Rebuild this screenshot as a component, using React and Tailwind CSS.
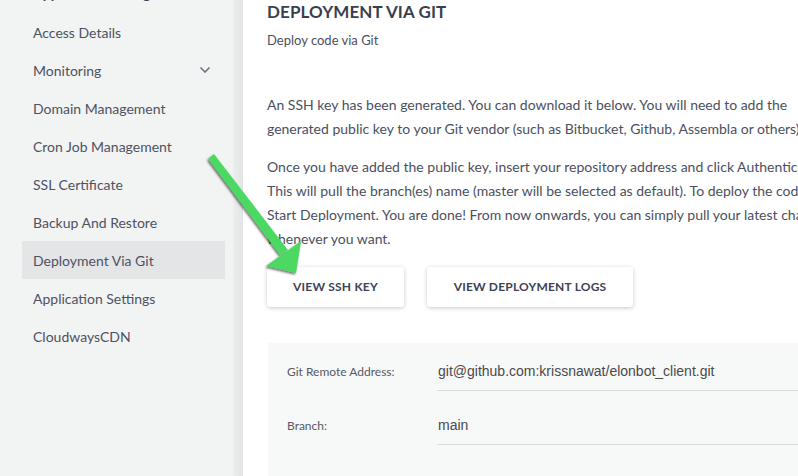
import React from "react";

const menu = [
  "Access Details",
  "Monitoring",
  "Domain Management",
  "Cron Job Management",
  "SSL Certificate",
  "Backup And Restore",
  "Deployment Via Git",
  "Application Settings",
  "CloudwaysCDN",
];

function Sidebar() {
  return (
    <aside className="relative w-[243px] shrink-0 h-full bg-[#f2f3f3] flex">
      <div className="flex-1 pl-[22px] pr-[8px]">
        <div className="-mt-[14px] mb-[11px] h-[16px] leading-[16px] pl-[11px] text-[14px] font-bold text-[#3b4050] whitespace-nowrap">
          Application Management
        </div>
        {menu.map((item) => (
          <div
            key={item}
            className={`h-[38px] flex items-center justify-between pl-[11px] pr-[14px] text-[14px] text-[#4d5262] ${
              item === "Deployment Via Git" ? "bg-[#e4e5e7]" : ""
            }`}
          >
            <span>{item}</span>
            {item === "Monitoring" && (
              <svg width="12" height="8" viewBox="0 0 12 8" fill="none">
                <path d="M1.5 1.5l4.5 4.5 4.5-4.5" stroke="#707585" strokeWidth="1.6" />
              </svg>
            )}
          </div>
        ))}
      </div>
      <div className="w-[10px] h-full bg-gradient-to-r from-[#eceded] to-[#e3e4e6]" />
    </aside>
  );
}

function Field({ label, value }) {
  return (
    <div className="flex items-stretch h-[39px]">
      <div className="w-[150px] shrink-0 flex items-center text-[12px] text-[#555a66]">{label}</div>
      <div className="flex-1 flex items-center border-b border-[#d9dadb] pl-[1px] text-[14px] text-[#4a4a4a] font-['Liberation_Sans',Arial,sans-serif]">
        {value}
      </div>
    </div>
  );
}

export default function App() {
  return (
    <div className="relative w-[798px] h-[476px] overflow-hidden bg-white flex font-['Lato',sans-serif]">
      <Sidebar />
      <main className="flex-1 min-w-0 pl-[24px] text-[#4b5060]">
        <h1 className="h-[24px] leading-[24px] text-[17px] font-bold text-[#3a3f4f] tracking-[0.1px]">
          DEPLOYMENT VIA GIT
        </h1>
        <p className="mt-[4px] leading-[24px] text-[13px]">Deploy code via Git</p>
        <div className="mt-[41px] text-[14px] leading-[24px] whitespace-nowrap">
          <p>
            An SSH key has been generated. You can download it below. You will need to add the
            <br />
            generated public key to your Git vendor (such as Bitbucket, Github, Assembla or others).
          </p>
          <p className="mt-[14px]">
            Once you have added the public key, insert your repository address and click Authenticate.
            <br />
            This will pull the branch(es) name (master will be selected as default). To deploy the code, click
            <br />
            Start Deployment. You are done! From now onwards, you can simply pull your latest changes
            <br />
            whenever you want.
          </p>
        </div>
        <div className="mt-[16px] flex gap-[23px]">
          <button className="w-[137px] h-[40px] bg-white rounded-[3px] shadow-[0_1px_4px_rgba(0,0,0,0.22)] text-[12px] font-bold text-[#3d4354] tracking-[0.2px]">
            VIEW SSH KEY
          </button>
          <button className="w-[206px] h-[40px] bg-white rounded-[3px] shadow-[0_1px_4px_rgba(0,0,0,0.22)] text-[12px] font-bold text-[#3d4354] tracking-[0.2px]">
            VIEW DEPLOYMENT LOGS
          </button>
        </div>
        <section className="mt-[36px] ml-[1px] h-[200px] bg-[#f7f8f8] pt-[9px] pl-[19px] flex flex-col gap-[15px]">
          <Field label="Git Remote Address:" value="git@github.com:krissnawat/elonbot_client.git" />
          <Field label="Branch:" value="main" />
        </section>
      </main>

      <svg className="absolute left-0 top-0 pointer-events-none" width="798" height="476">
        <defs>
          <filter id="sh" x="-20%" y="-20%" width="140%" height="140%">
            <feDropShadow dx="-1" dy="1.5" stdDeviation="1.2" floodColor="#000" floodOpacity="0.6" />
          </filter>
        </defs>
        <g filter="url(#sh)" fill="#4cd964">
          <path d="M208 159 L214 154 L288 250 L280 255 Z" />
          <path d="M296 273 L266 266 L301 241 Z" />
        </g>
      </svg>
    </div>
  );
}
